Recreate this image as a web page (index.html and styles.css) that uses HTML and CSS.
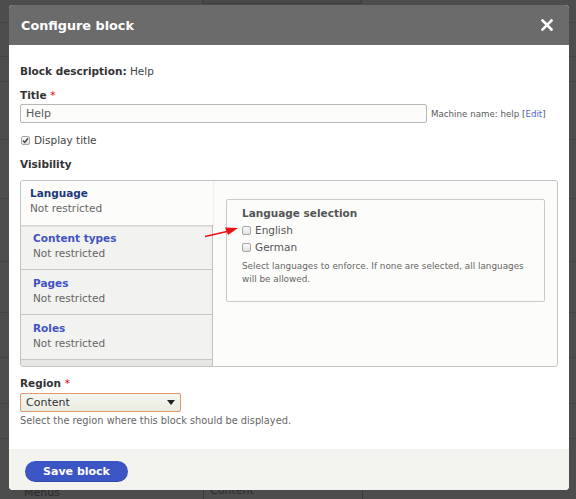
FILE: index.html
```html
<!DOCTYPE html>
<html>
<head>
<meta charset="utf-8">
<link rel="stylesheet" href="styles.css">
</head>
<body>
<div class="page">
  <div class="prow r1"><span class="topbox"></span></div>
  <div class="prow r2"></div>
  <div class="prow r3"></div>
  <div class="prow r4"></div>
  <div class="prow r5"></div>
  <div class="prow r6"></div>
  <div class="prow r7"></div>
  <div class="prow r8"></div>
  <div class="prow r9"></div>
  <div class="prow r10"></div>
  <div class="prow r11"><span class="menus">Menus</span><span class="bgselect">Content</span></div>
</div>

<div class="dialog">
  <div class="titlebar">
    <span class="dtitle">Configure block</span>
    <svg class="close" width="12" height="12" viewBox="0 0 12 12"><path d="M1.5 1.5 L10.5 10.5 M10.5 1.5 L1.5 10.5" stroke="#fff" stroke-width="2.6" stroke-linecap="square"/></svg>
  </div>
  <div class="dbody">
    <div class="desc"><b>Block description:</b> Help</div>
    <div class="label lbl-title">Title <span class="req">*</span></div>
    <div class="inrow">
      <div class="textin">Help</div>
      <span class="machine">Machine name: help [<a class="lnk">Edit</a>]</span>
    </div>
    <div class="check dtitle-row"><span class="cb checked"><svg width="7" height="7" viewBox="0 0 7 7"><path d="M1 3.6 L2.8 5.4 L6 1.3" stroke="#444" stroke-width="1.4" fill="none"/></svg></span>Display title</div>
    <div class="label lbl-vis">Visibility</div>
    <div class="vtabs">
      <div class="menu">
        <div class="tab sel"><div class="tname">Language</div><div class="tsum">Not restricted</div></div>
        <div class="tab"><div class="tname">Content types</div><div class="tsum">Not restricted</div></div>
        <div class="tab"><div class="tname">Pages</div><div class="tsum">Not restricted</div></div>
        <div class="tab"><div class="tname">Roles</div><div class="tsum">Not restricted</div></div>
        <div class="tabfill"></div>
      </div>
      <div class="pane">
        <div class="fieldset">
          <div class="legend">Language selection</div>
          <div class="check opt"><span class="cb"></span>English</div>
          <div class="check opt"><span class="cb"></span>German</div>
          <div class="fdesc">Select languages to enforce. If none are selected, all languages will be allowed.</div>
        </div>
      </div>
      <svg class="arrow" width="36" height="14" viewBox="0 0 36 14"><path d="M0 11.5 L22 6.5" stroke="#f01010" stroke-width="1.6"/><path d="M33 3 L20 2.5 L23 10 Z" fill="#f01010"/></svg>
    </div>
    <div class="label lbl-region">Region <span class="req">*</span></div>
    <div class="select"><span>Content</span><span class="caret"></span></div>
    <div class="rdesc">Select the region where this block should be displayed.</div>
  </div>
  <div class="footer">
    <button class="btn">Save block</button>
  </div>
</div>
</body>
</html>
```
FILE: styles.css
```css
* { box-sizing: border-box; }
html, body { margin: 0; padding: 0; }
body {
  width: 576px;
  height: 499px;
  overflow: hidden;
  position: relative;
  background: #4d4d4d;
  font-family: "DejaVu Sans", Verdana, sans-serif;
  font-size: 11px;
  color: #333;
}
.page { width: 576px; }
.prow { border-bottom: 1px solid #444; position: relative; }
.r1 { height: 23px; }
.r2 { height: 34px; }
.r3 { height: 25px; }
.r4 { height: 58px; }
.r5 { height: 59px; }
.r6 { height: 63px; }
.r7 { height: 51px; }
.r8 { height: 45px; }
.r9 { height: 46px; }
.r10 { height: 35px; }
.r11 { height: 60px; border-bottom: none; display: flex; padding-top: 48px; }
.topbox { position: absolute; left: 202px; top: -2px; width: 160px; height: 6px; border: 1px solid #3e3e3e; background: #484848; }
.menus { margin-left: 24px; color: #2a2a2a; font-size: 11px; line-height: 11px; }
.bgselect { position: absolute; left: 203px; top: 46px; width: 160px; height: 18px; border-left: 1px solid #3a3a3a; border-right: 1px solid #3a3a3a; color: #2a2a2a; font-size: 11px; line-height: 11px; padding-left: 6px; }

.dialog {
  position: absolute;
  left: 9px;
  top: 5px;
  width: 560px;
  height: 485px;
  background: #fff;
  border-radius: 4px;
  overflow: hidden;
  display: flex;
  flex-direction: column;
}
.titlebar {
  height: 40px;
  flex: none;
  background: #6b6b6b;
  display: flex;
  align-items: center;
  justify-content: space-between;
  padding: 0 16px 0 12px;
}
.dtitle { color: #fff; font-weight: bold; font-size: 12.8px; }
.close { display: block; }

.dbody { flex: 1; padding: 19px 11px 0 11px; position: relative; }
.desc { line-height: 14px; font-size: 10.5px; color: #444; }
.desc b { color: #333; }
.label { font-weight: bold; line-height: 14px; color: #333; font-size: 10.5px; }
.req { color: #e00; font-weight: normal; }
.lbl-title { margin-top: 10px; }
.inrow { display: flex; align-items: center; margin-top: 2px; }
.textin {
  width: 407px;
  height: 19px;
  border: 1px solid #b8b8b8;
  border-radius: 2px;
  background: #fcfcfa;
  padding-left: 5px;
  line-height: 17px;
  font-size: 11px;
  color: #595959;
}
.machine { margin-left: 4px; font-size: 8.7px; color: #595959; }
.lnk { color: #4a68d0; }
.check { display: flex; align-items: center; line-height: 14px; font-size: 10.5px; color: #444; }
.dtitle-row { margin-top: 10px; }
.cb {
  width: 9px; height: 9px;
  border: 1px solid #a5a5a5;
  border-radius: 2px;
  background: linear-gradient(#fafafa, #e2e2e2);
  margin: 0 4px 0 1px;
  display: flex; align-items: center; justify-content: center;
}
.cb svg { display: block; }
.lbl-vis { margin-top: 10px; }

.vtabs {
  margin-top: 9px;
  height: 187px;
  border: 1px solid #c3c3c3;
  border-radius: 3px;
  background: #fcfcfa;
  display: flex;
  position: relative;
  overflow: hidden;
}
.menu {
  width: 192px;
  flex: none;
  background: #f2f2f0;
  border-right: 1px solid #c0c0c0;
  display: flex;
  flex-direction: column;
}
.tab {
  height: 45px;
  padding: 6px 0 0 12px;
  border-bottom: 1px solid #c7c7c7;
  line-height: 15px;
  flex: none;
}
.tab.sel {
  height: 44px;
  padding: 5px 0 0 9px;
  background: #fcfcfa;
  margin-right: -1px;
  border-bottom: none;
  box-shadow: 0 1px 2px rgba(0,0,0,0.18);
  position: relative;
  z-index: 1;
}
.tname { font-weight: bold; color: #4152c4; font-size: 10.5px; }
.tab.sel .tname { color: #233a7a; }
.tsum { color: #666; font-size: 10.5px; }
.tabfill { flex: 1; background: #e6e6e2; }
.pane { flex: 1; padding: 18px 12px 0 13px; }
.fieldset {
  height: 103px;
  border: 1px solid #cbcbcb;
  border-radius: 2px;
  background: #fcfcfa;
  padding: 6px 15px 0 15px;
}
.legend { font-weight: bold; color: #555; line-height: 14px; font-size: 10.5px; }
.opt { color: #555; line-height: 17px; font-size: 10.5px; }
.opt .cb { margin-left: 0; }
.legend + .opt { margin-top: 2px; }
.fdesc { margin-top: 4px; font-size: 8.85px; line-height: 13px; color: #666; }
.arrow { position: absolute; left: 184px; top: 44px; }

.lbl-region { margin-top: 9px; }
.select {
  margin-top: 3px;
  width: 161px;
  height: 19px;
  border: 1px solid #e0996c;
  border-radius: 2px;
  background: linear-gradient(#f5f6f0, #e9ece0);
  display: flex;
  align-items: center;
  justify-content: space-between;
  padding: 0 5px 0 5px;
  font-size: 11px;
  color: #333;
}
.caret { width: 0; height: 0; border-left: 4px solid transparent; border-right: 4px solid transparent; border-top: 5px solid #222; }
.rdesc { margin-top: 2px; line-height: 14px; font-size: 9.8px; color: #666; }

.footer {
  height: 41px;
  flex: none;
  background: #f3f3ef;
  padding: 12px 0 0 16px;
}
.btn {
  width: 103px;
  height: 21px;
  border: none;
  border-radius: 11px;
  background: #3b55c4;
  color: #fff;
  font-family: "DejaVu Sans", Verdana, sans-serif;
  font-weight: bold;
  font-size: 11px;
  padding: 0;
  box-shadow: inset 0 -1px 0 rgba(0,0,0,0.15);
}
```
